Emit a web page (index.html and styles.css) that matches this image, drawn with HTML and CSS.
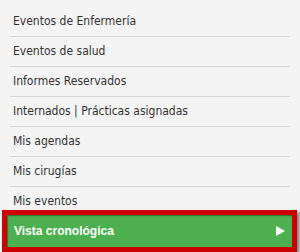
FILE: index.html
```html
<!DOCTYPE html>
<html lang="es">
<head>
    <meta charset="UTF-8">
    <meta name="viewport" content="width=device-width, initial-scale=1.0">
    <title>Menú</title>
    <link rel="stylesheet" href="styles.css">
</head>

<body>
    <!-- menú lateral -->
    <div class="sideMenu">
        <ul class="menuList">
            <li>Eventos de Enfermería</li>
            <li>Eventos de salud</li>
            <li>Informes Reservados</li>
            <li>Internados | Prácticas asignadas</li>
            <li>Mis agendas</li>
            <li>Mis cirugías</li>
            <li>Mis eventos</li>
        </ul>
        <!-- opción activa -->
        <div class="activeItem">
            <span>Vista cronológica</span>
            <svg class="arrow" width="9" height="10" viewBox="0 0 9 10">
                <polygon points="0,0 9,5 0,10" fill="#fff" />
            </svg>
        </div>
    </div>
</body>

</html>
```

FILE: styles.css
```css
* {
    padding: 0;
    margin: 0;
}

body {
    background-color: #f4f4f4;
    font-family: "DejaVu Sans Condensed", "DejaVu Sans", sans-serif;
    font-size: 12px;
    color: #333;
}

.sideMenu {
    width: 300px;
    height: 252px;
    padding-top: 7px;
    box-sizing: border-box;
    overflow: hidden;
}

.menuList {
    list-style: none;
}

.menuList li {
    margin: 0 10px;
    padding-left: 3px;
    height: 29px;
    line-height: 29px;
    border-bottom: 1px solid #d3d3d3;
}

.activeItem {
    position: relative;
    display: flex;
    align-items: center;
    justify-content: space-between;
    width: 295px;
    height: 42px;
    margin: -7px 0 0 2px;
    padding: 0 7px 0 7px;
    box-sizing: border-box;
    border: 5px solid #cc0000;
    background-color: #4caf50;
    box-shadow: inset 1px 1px 1px rgba(0, 0, 0, 0.35), 3px 2px 3px rgba(0, 0, 0, 0.45);
    color: #fff;
    font-family: "Liberation Sans", Arial, sans-serif;
    font-weight: bold;
    font-size: 12px;
}
```
